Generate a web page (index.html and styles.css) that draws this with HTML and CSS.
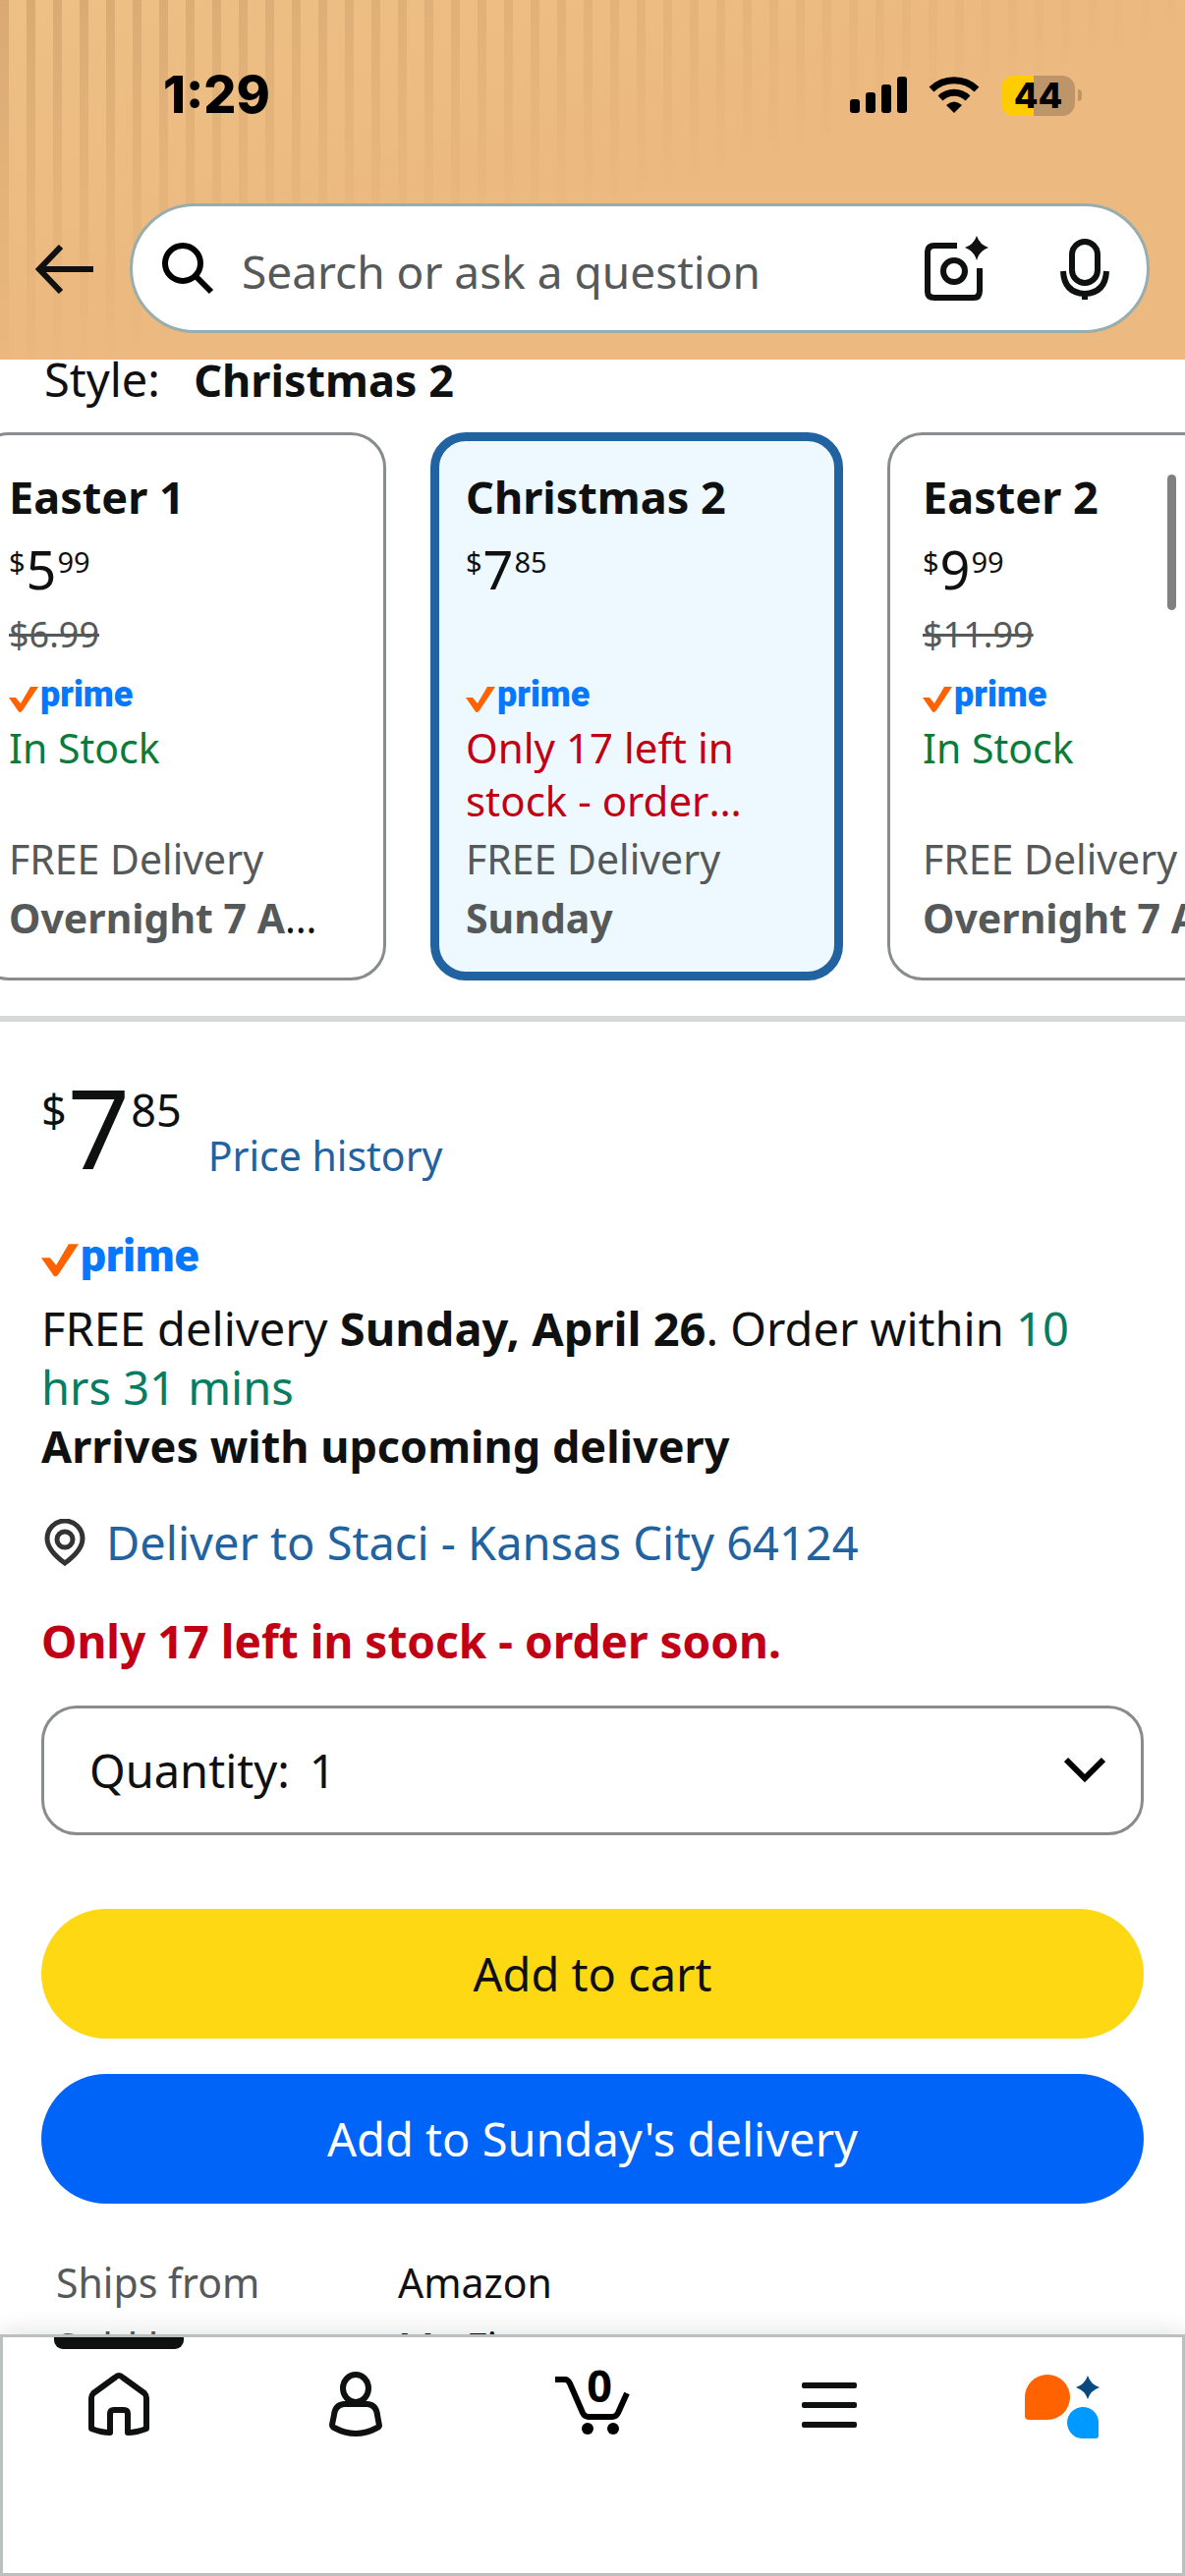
FILE: index.html
```html
<!DOCTYPE html>
<html lang="en">

<head>
  <meta charset="utf-8">
  <meta name="viewport" content="width=device-width, initial-scale=1">
  <title>Christmas 2</title>
  <link rel="stylesheet" href="styles.css">
</head>

<body>
<div class="screen">

<header class="header">
  <div class="status">
    <span class="time">1:29</span>
    <div class="status-icons">
      <svg width="58" height="38" viewBox="0 0 58 38">
        <rect x="0" y="23" width="10" height="14" rx="3"/>
        <rect x="16" y="16" width="10" height="21" rx="3"/>
        <rect x="32" y="8" width="10" height="29" rx="3"/>
        <rect x="48" y="0" width="10" height="37" rx="3"/>
      </svg>
      <svg width="52" height="38" viewBox="0 0 52 38">
        <path d="M3 13 A33 33 0 0 1 49 13" fill="none" stroke="#000" stroke-width="7"/>
        <path d="M12 22 A20 20 0 0 1 40 22" fill="none" stroke="#000" stroke-width="7"/>
        <path d="M26 37 L18 29 Q26 22 34 29 Z"/>
      </svg>
      <div class="battery"><span>44</span></div>
    </div>
  </div>

  <div class="search-row">
    <button class="icon-button" aria-label="Back">
      <svg width="60" height="50" viewBox="0 0 60 50" fill="none" stroke="#0f1111" stroke-width="6">
        <path d="M26 2 L4 25 L26 48 M4 25 H59"/>
      </svg>
    </button>
    <form class="search">
      <svg width="54" height="54" viewBox="0 0 54 54" fill="none" stroke="#000" stroke-width="6">
        <circle cx="22" cy="22" r="18"/>
        <path d="M35 35 L51 51"/>
      </svg>
      <input type="search" placeholder="Search or ask a question" aria-label="Search or ask a question">
      <button class="icon-button" type="button" aria-label="Search by photo">
        <svg width="66" height="68" viewBox="0 0 66 68">
          <path d="M33 10 H10 Q3 10 3 17 V57 Q3 63 10 63 H50 Q56 63 56 56 V33" fill="none" stroke="#0f1111" stroke-width="6"/>
          <circle cx="30" cy="36" r="11" fill="none" stroke="#0f1111" stroke-width="6"/>
          <path d="M53 0 Q56 9 65 12 Q56 15 53 25 Q50 15 41 12 Q50 9 53 0 Z" fill="#0f1111"/>
        </svg>
      </button>
      <button class="icon-button mic" type="button" aria-label="Search by voice">
        <svg width="50" height="62" viewBox="0 0 50 62" fill="none" stroke="#0f1111" stroke-width="6">
          <rect x="12" y="3" width="26" height="42" rx="13"/>
          <path d="M3 33 Q4 55 25 56 Q46 55 47 33 M25 56 V62"/>
        </svg>
      </button>
    </form>
  </div>
</header>

<main class="content">

<p class="style-label">Style: <b>Christmas 2</b></p>

<div class="swatches">
  <button class="swatch">
    <span class="name">Easter 1</span>
    <span class="price"><sup>$</sup>5<sup>99</sup></span>
    <s class="list-price">$6.99</s>
    <span class="prime"><svg viewBox="0 0 30 28"><path d="M0 12 H7 L12 18 L22 1 H30 L14 25 Q11 29 9 25 Z"/></svg>prime</span>
    <span class="stock"><span class="in-stock">In Stock</span></span>
    <span class="line">FREE Delivery</span>
    <span class="line last"><b>Overnight 7 AM - 11 AM</b></span>
  </button>
  <button class="swatch selected">
    <span class="name">Christmas 2</span>
    <span class="price"><sup>$</sup>7<sup>85</sup></span>
    <span class="list-price"></span>
    <span class="prime"><svg viewBox="0 0 30 28"><path d="M0 12 H7 L12 18 L22 1 H30 L14 25 Q11 29 9 25 Z"/></svg>prime</span>
    <span class="stock"><span class="low-stock">Only 17 left in stock - order soon.</span></span>
    <span class="line">FREE Delivery</span>
    <span class="line last"><b>Sunday</b></span>
  </button>
  <button class="swatch">
    <span class="name">Easter 2</span>
    <span class="price"><sup>$</sup>9<sup>99</sup></span>
    <s class="list-price">$11.99</s>
    <span class="prime"><svg viewBox="0 0 30 28"><path d="M0 12 H7 L12 18 L22 1 H30 L14 25 Q11 29 9 25 Z"/></svg>prime</span>
    <span class="stock"><span class="in-stock">In Stock</span></span>
    <span class="line">FREE Delivery</span>
    <span class="line last"><b>Overnight 7 AM - 11 AM</b></span>
  </button>
</div>

<section class="buybox">
  <div class="price-row">
    <span class="price big"><sup>$</sup>7<sup>85</sup></span>
    <a href="#history">Price history</a>
  </div>

  <div class="prime big"><svg viewBox="0 0 30 28"><path d="M0 12 H7 L12 18 L22 1 H30 L14 25 Q11 29 9 25 Z"/></svg>prime</div>

  <p class="delivery">FREE delivery <b>Sunday, April 26</b>. Order within <span class="countdown">10 hrs 31 mins</span></p>
  <p class="upcoming">Arrives with upcoming delivery</p>

  <a class="address" href="#address">
    <svg width="42" height="48" viewBox="0 0 42 48" fill="none" stroke="#333" stroke-width="5">
      <path d="M21 45 Q3 32 3 20 A18 18 0 0 1 39 20 Q39 32 21 45 Z"/>
      <circle cx="21" cy="21" r="8"/>
    </svg>
    Deliver to Staci - Kansas City 64124
  </a>

  <p class="availability">Only 17 left in stock - order soon.</p>

  <div class="quantity">
    <label for="quantity">Quantity:</label>
    <select id="quantity">
      <option>1</option>
      <option>2</option>
      <option>3</option>
    </select>
    <svg width="42" height="28" viewBox="0 0 42 28" fill="none" stroke="#000" stroke-width="6">
      <path d="M2 3 L21 22 L40 3"/>
    </svg>
  </div>

  <button class="buy cart">Add to cart</button>
  <button class="buy add-on">Add to Sunday's delivery</button>

  <table class="seller">
    <tr>
      <th>Ships from</th>
      <td>Amazon</td>
    </tr>
    <tr>
      <th>Sold by</th>
      <td>Mr. Five</td>
    </tr>
  </table>
</section>

<div class="scrollbar"></div>
</main>

<nav class="tabs">
  <a class="active" href="#home" aria-label="Home">
    <svg width="62" height="72" viewBox="0 0 62 72" fill="none" stroke="#0f1111" stroke-width="6" stroke-linejoin="round">
      <path d="M31 8 Q29 8 27 10 L5 26 Q3 28 3 31 V62 Q13 66 22 66 V47 Q22 43 26 43 H36 Q40 43 40 47 V66 Q49 66 59 62 V31 Q59 28 57 26 L35 10 Q33 8 31 8 Z"/>
    </svg>
  </a>
  <a href="#you" aria-label="Your account">
    <svg width="54" height="72" viewBox="0 0 54 72" fill="none" stroke="#0f1111" stroke-width="6">
      <ellipse cx="27" cy="21" rx="13" ry="14"/>
      <path d="M15 37 H39 Q48 38 49 48 L51 59 Q51 60 49 61 Q27 73 5 61 Q3 60 3 58 L5 48 Q6 38 15 37 Z"/>
    </svg>
  </a>
  <a href="#cart" aria-label="Cart">
    <svg width="78" height="72" viewBox="0 0 78 72" fill="none" stroke="#000" stroke-width="6">
      <path d="M1 12 H11 Q14 12 16 16 L29 46 Q31 50 35 50 H59 Q63 50 65 46 L74 26"/>
      <circle cx="34" cy="62" r="6" fill="#000" stroke="none"/>
      <circle cx="60" cy="62" r="6" fill="#000" stroke="none"/>
    </svg>
    <span class="count">0</span>
  </a>
  <a href="#menu" aria-label="Menu">
    <svg width="56" height="72" viewBox="0 0 56 72" fill="#0f1111">
      <rect y="15" width="56" height="6" rx="2"/>
      <rect y="35" width="56" height="6" rx="2"/>
      <rect y="55" width="56" height="6" rx="2"/>
    </svg>
  </a>
  <a href="#rufus" aria-label="Rufus">
    <svg width="84" height="72" viewBox="0 0 84 72">
      <path d="M0 30 A23 23 0 1 1 23 53 H4 Q0 53 0 49 Z" fill="#ff6200"/>
      <path d="M75 55 A16 16 0 1 0 59 72 H72 Q75 72 75 69 Z" fill="#0099ff"/>
      <path d="M64 8 Q67 17 76 20 Q67 23 64 32 Q61 23 52 20 Q61 17 64 8 Z" fill="#064a80"/>
    </svg>
  </a>
</nav>

</div>
</body>

</html>
```
FILE: styles.css
```css
* { box-sizing: border-box }
body { background: white; color: #0f1111; font-family: "Noto Sans", sans-serif; font-size: 47px; line-height: 60px; margin: 0 }
p { margin: 0 }
a { color: #2162a1; text-decoration: none }
svg { display: block; flex: none }
button, input, select { color: inherit; font: inherit }
button { cursor: pointer }

.screen { display: flex; flex-direction: column; height: 100vh; overflow: hidden }

/* Header */

.header {
  background: linear-gradient(to bottom right, #edc085, #ecb980 50%);
  padding: 67px 36px 27px;
  position: relative;
}

.header::before {
  background: repeating-linear-gradient(to right, #d9a972 0 9px, transparent 9px 27px);
  content: "";
  inset: 0;
  -webkit-mask-image: linear-gradient(to bottom right, #000, transparent 54%);
  mask-image: linear-gradient(to bottom right, #000, transparent 54%);
  position: absolute;
}

.status { color: #000; display: flex; justify-content: space-between; padding: 0 76px 0 130px; position: relative }
.time { font-family: Inter, sans-serif; font-size: 52px; font-weight: 800 }
.status-icons { align-items: center; display: flex; gap: 22px }

.battery {
  background: linear-gradient(to right, #ffcc00 44%, #be9568 44%);
  border-radius: 13px;
  font-family: Inter, sans-serif;
  font-size: 36px;
  font-weight: 800;
  line-height: 41px;
  position: relative;
  text-align: center;
  width: 75px;
}

.battery::after {
  background: #be9568;
  border-radius: 0 4px 4px 0;
  content: "";
  height: 12px;
  left: 78px;
  position: absolute;
  top: 14px;
  width: 4px;
}

.search-row { align-items: center; display: flex; gap: 36px; margin-top: 80px; position: relative }
.icon-button { background: none; border: 0; padding: 2px 0 0 }

.search {
  align-items: center;
  background: white;
  border: 3px solid #98adad;
  border-radius: 66px;
  display: flex;
  flex: 1;
  height: 132px;
  padding: 0 38px 0 29px;
}

.search input {
  background: none;
  border: 0;
  flex: 1;
  font-size: 46px;
  min-width: 0;
  outline: none;
  padding: 6px 0 0 28px;
}

.search input::placeholder { color: #565959; opacity: 1 }
.search .mic { margin-left: 72px }

/* Style picker */

.content { flex: 1; min-height: 0; overflow: hidden; position: relative }
.style-label { height: 42px; line-height: 40px; padding-left: 45px }
.style-label b { font-size: 45px; margin-left: 22px }

.swatches {
  border-bottom: 6px solid #d5d9d9;
  display: flex;
  gap: 45px;
  margin-top: 32px;
  overflow: hidden;
  padding-bottom: 36px;
}

.swatch {
  background: white;
  border: 3px solid #888c8c;
  border-radius: 36px;
  display: flex;
  flex: none;
  flex-direction: column;
  font-size: 41px;
  padding: 33px 33px 31px;
  text-align: left;
  width: 420px;
}

.swatch:first-child { margin-left: -27px }
.swatch.selected { background: #edf8ff; border: 9px solid #2162a1; padding: 27px 27px 25px }
.name { font-size: 45px; font-weight: bold; margin-bottom: 10px }
.list-price { color: #565959; font-size: 36px; height: 54px; line-height: 54px; margin: 7px 0 }
.stock { height: 108px; line-height: 54px; margin-bottom: 2px }
.stock > span { display: -webkit-box; overflow: hidden; -webkit-box-orient: vertical; -webkit-line-clamp: 2 }
.in-stock { color: #0b7b3c }
.low-stock { color: #c10015; font-size: 42px }
.line { color: #565959 }
.line.last { color: #0f1111; overflow: hidden; text-overflow: ellipsis; white-space: nowrap }
.line b { color: #565959 }

.price { display: flex; font-size: 54px; line-height: 66px }
.price sup { font-size: 29px; line-height: 36px; margin: 8px 1px 0 0 }
.price sup:last-child { margin: 8px 0 0 1px }
.price.big { font-size: 111px; line-height: 111px }
.price.big sup { font-size: 45px; line-height: 60px }

.prime { align-items: center; color: #0578ff; display: flex; font-family: Roboto, sans-serif; font-size: 36px; font-weight: 900; gap: 2px; line-height: 54px }
.prime svg { fill: #ff6200; margin-top: 10px; width: 30px }
.prime.big { font-size: 46px; line-height: 60px }
.prime.big svg { width: 38px }

/* Buy box */

.buybox { padding: 52px 42px 0 }
.price-row { align-items: flex-end; display: flex; gap: 27px; margin-bottom: 45px }
.price-row a { font-size: 41px; line-height: 54px }
.delivery { margin-top: 14px; padding-right: 24px }
.countdown { color: #067d62 }
.upcoming { font-size: 45px; font-weight: bold }
.address { align-items: center; display: flex; gap: 21px; margin-top: 38px; padding-left: 3px }
.availability { color: #c10015; font-size: 46px; font-weight: bold; margin-top: 40px }

.quantity {
  align-items: center;
  border: 3px solid #888c8c;
  border-radius: 36px;
  display: flex;
  height: 132px;
  margin: 36px 0 75px;
  padding: 0 36px 0 46px;
}

.quantity select { appearance: none; background: none; border: 0; flex: 1; outline: none; padding: 0 0 0 20px }

.buy { border: 0; border-radius: 66px; display: block; height: 132px; margin-bottom: 36px; width: 100% }
.cart { background: #ffd814 }
.add-on { background: #0064f9; color: white }

.seller { border-collapse: collapse; font-size: 41px; line-height: 66px; margin: 47px 0 0 15px }
.seller th { color: #565959; font-weight: normal; padding: 0; text-align: left; width: 348px }
.seller td { padding: 0 }

.scrollbar { background: #808080; border-radius: 5px; height: 138px; position: absolute; right: 9px; top: 117px; width: 9px }

/* Bottom tabs */

.tabs {
  background: white;
  box-shadow: inset 0 0 0 3px #babfbf, 0 0 24px rgba(15, 17, 17, 0.15);
  display: flex;
  height: 246px;
  position: relative;
}

.tabs a { color: #000; display: flex; flex: 1; justify-content: center; padding-top: 34px; position: relative }

.tabs .active::before {
  background: #0f1111;
  border-radius: 0 0 9px 9px;
  content: "";
  height: 12px;
  left: 50%;
  margin-left: -66px;
  position: absolute;
  top: 3px;
  width: 132px;
}

.count { font-size: 45px; font-weight: bold; left: 14px; position: absolute; right: 0; text-align: center; top: 22px }
```
